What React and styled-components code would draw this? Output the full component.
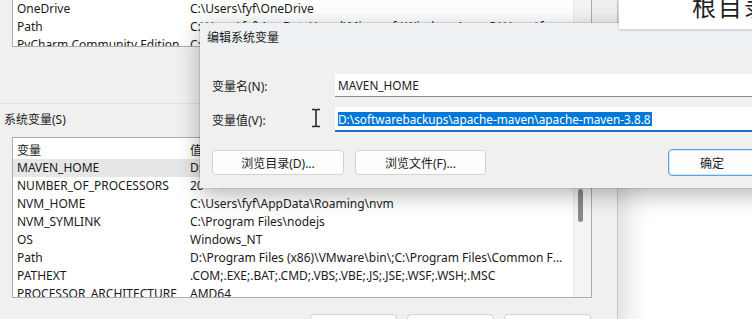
import React from "react";
import styled, { createGlobalStyle } from "styled-components";

const GlobalStyle = createGlobalStyle`
  html, body {
    margin: 0;
    padding: 0;
  }
  body {
    width: 752px;
    height: 319px;
    overflow: hidden;
    background: #ffffff;
    font-family: "Noto Sans", "Noto Sans CJK SC", sans-serif;
    color: #1b1b1b;
  }
`;

const Desktop = styled.div`
  position: relative;
  width: 752px;
  height: 319px;
  overflow: hidden;
  background: #ffffff;
`;

// background window: environment variables
const EnvWindow = styled.div`
  position: absolute;
  left: 0;
  top: 0;
  width: 617px;
  height: 340px;
  background: #f0f0f0;
  border-right: 1px solid #c9c9c9;
  box-shadow: 6px 0 28px rgba(0, 0, 0, 0.16);
  display: flex;
  flex-direction: column;
  z-index: 1;
`;

const ListBox = styled.div`
  margin-left: 12px;
  width: 580px;
  height: ${(p) => p.$height}px;
  margin-top: ${(p) => p.$top || 0}px;
  background: #ffffff;
  border: 1px solid #acacac;
  border-top-color: ${(p) => (p.$cut ? "transparent" : "#acacac")};
  box-sizing: border-box;
  display: flex;
  overflow: hidden;
`;

const Rows = styled.div`
  flex: 1;
  min-width: 0;
  padding-top: ${(p) => p.$pad || 0}px;
`;

const Row = styled.div`
  display: grid;
  grid-template-columns: 173px 1fr;
  height: 18px;
  align-items: center;
  padding-left: 4px;
  font-size: 12px;
  white-space: nowrap;
  background: ${(p) => (p.$selected ? "#e6e6e6" : "transparent")};
`;

const Cell = styled.span`
  overflow: hidden;
  text-overflow: ellipsis;
  padding-right: ${(p) => (p.$name ? 2 : 10)}px;
`;

const Scrollbar = styled.div`
  position: relative;
  width: 17px;
  background: #f4f4f4;
  border-left: 1px solid #ebebeb;
`;

const Thumb = styled.div`
  position: absolute;
  left: 4px;
  top: ${(p) => p.$top}px;
  width: 5px;
  height: ${(p) => p.$height}px;
  border-radius: 3px;
  background: #8a8a8a;
`;

const Separator = styled.div`
  margin-top: 56px;
  height: 0;
  border-top: 1px solid #e0e0e0;
`;

const GroupLabel = styled.div`
  margin-top: 8px;
  padding-left: 4px;
  font-size: 12px;
  line-height: 16px;
  height: 16px;
`;

const BottomButtons = styled.div`
  display: flex;
  gap: 10px;
  padding-left: 310px;
  margin-top: 16px;
`;

const Button = styled.div`
  width: ${(p) => p.$w}px;
  height: ${(p) => p.$h || 25}px;
  box-sizing: border-box;
  background: #fdfdfd;
  border: 1px solid ${(p) => (p.$primary ? "#5da3de" : "#d3d3d3")};
  box-shadow: ${(p) => (p.$primary ? "inset 0 0 0 1px #cfe4f6" : "none")};
  border-radius: 4px;
  font-size: 12px;
  display: flex;
  align-items: center;
  justify-content: center;
  flex-shrink: 0;
`;

// foreground dialog: edit system variable
const Dialog = styled.div`
  position: absolute;
  left: 200px;
  top: 23px;
  width: 580px;
  height: 165px;
  background: #f0f0f0;
  box-shadow: 0 6px 22px rgba(0, 0, 0, 0.3), 0 0 0 1px rgba(0, 0, 0, 0.1);
  display: flex;
  flex-direction: column;
  z-index: 2;
`;

const TitleBar = styled.div`
  height: 27px;
  background: #eef2f4;
  padding-left: 7px;
  display: flex;
  align-items: center;
  font-size: 12px;
`;

const DialogBody = styled.div`
  flex: 1;
  padding: 24px 24px 0 12px;
  display: flex;
  flex-direction: column;
`;

const FieldRow = styled.div`
  display: flex;
  align-items: center;
  margin-top: ${(p) => p.$gap || 0}px;
`;

const FieldLabel = styled.div`
  width: 123px;
  font-size: 12px;
  flex-shrink: 0;
`;

const Input = styled.div`
  flex: 1;
  height: ${(p) => p.$h}px;
  box-sizing: border-box;
  background: #ffffff;
  border-bottom: ${(p) => (p.$focused ? "2px solid #1a73c9" : "1px solid #8c8c8c")};
  padding-left: 3px;
  display: flex;
  align-items: center;
  font-size: 11.8px;
  white-space: nowrap;
`;

const Selection = styled.span`
  background: #0078d7;
  color: #ffffff;
  line-height: 14px;
  padding-right: 1px;
`;

const DialogButtons = styled.div`
  display: flex;
  align-items: center;
  margin-top: 17px;
  gap: 11px;
`;

const Spacer = styled.div`
  flex: 1;
`;

const Cursor = styled.svg`
  position: absolute;
  left: 310px;
  top: 108px;
  z-index: 5;
`;

// white window peeking at top right
const CornerWindow = styled.div`
  position: absolute;
  left: 619px;
  top: 0;
  width: 140px;
  height: 29px;
  background: #ffffff;
  box-shadow: 0 1px 3px rgba(0, 0, 0, 0.18);
  padding-left: 73px;
  box-sizing: border-box;
  overflow: hidden;
  z-index: 3;
`;

const CornerTitle = styled.div`
  margin-top: -5px;
  font-size: 24px;
  line-height: 24px;
  letter-spacing: 2px;
  color: #1e1e1e;
  white-space: nowrap;
`;

const userVars = [
  ["OneDrive", "C:\\Users\\fyf\\OneDrive"],
  ["Path", "C:\\Users\\fyf\\AppData\\Local\\Microsoft\\WindowsApps;C:\\Users\\fyf\\.dotnet\\tools"],
  ["PyCharm Community Edition", "C:\\Program Files\\JetBrains\\PyCharm Community Edition\\bin;"],
];

const sysVars = [
  ["MAVEN_HOME", "D:\\softwarebackups\\apache-maven\\apache-maven-3.8.8"],
  ["NUMBER_OF_PROCESSORS", "20"],
  ["NVM_HOME", "C:\\Users\\fyf\\AppData\\Roaming\\nvm"],
  ["NVM_SYMLINK", "C:\\Program Files\\nodejs"],
  ["OS", "Windows_NT"],
  ["Path", "D:\\Program Files (x86)\\VMware\\bin\\;C:\\Program Files\\Common Files\\Oracle\\Java\\javapath"],
  ["PATHEXT", ".COM;.EXE;.BAT;.CMD;.VBS;.VBE;.JS;.JSE;.WSF;.WSH;.MSC"],
  ["PROCESSOR_ARCHITECTURE", "AMD64"],
];

export default function App() {
  return (
    <Desktop>
      <GlobalStyle />

      <EnvWindow>
        <ListBox $height={49} $top={-2} $cut>
          <Rows>
            {userVars.map(([n, v]) => (
              <Row key={n}>
                <Cell $name>{n}</Cell>
                <Cell>{v}</Cell>
              </Row>
            ))}
          </Rows>
          <Scrollbar />
        </ListBox>

        <Separator />
        <GroupLabel>系统变量(S)</GroupLabel>

        <ListBox $height={162} $top={9}>
          <Rows $pad={3}>
            <Row>
              <Cell $name>变量</Cell>
              <Cell>值</Cell>
            </Row>
            {sysVars.map(([n, v], i) => (
              <Row key={n} $selected={i === 0}>
                <Cell $name>{n}</Cell>
                <Cell>{v}</Cell>
              </Row>
            ))}
          </Rows>
          <Scrollbar>
            <Thumb $top={51} $height={33} />
          </Scrollbar>
        </ListBox>

        <BottomButtons>
          <Button $w={87} $h={26}>新建(W)...</Button>
          <Button $w={87} $h={26}>编辑(I)...</Button>
          <Button $w={87} $h={26}>删除(L)</Button>
        </BottomButtons>
      </EnvWindow>

      <Dialog>
        <TitleBar>编辑系统变量</TitleBar>
        <DialogBody>
          <FieldRow>
            <FieldLabel>变量名(N):</FieldLabel>
            <Input $h={23}>MAVEN_HOME</Input>
          </FieldRow>
          <FieldRow $gap={10}>
            <FieldLabel>变量值(V):</FieldLabel>
            <Input $h={25} $focused>
              <Selection>D:\softwarebackups\apache-maven\apache-maven-3.8.8</Selection>
            </Input>
          </FieldRow>
          <DialogButtons>
            <Button $w={132}>浏览目录(D)...</Button>
            <Button $w={131}>浏览文件(F)...</Button>
            <Spacer />
            <Button $w={88} $h={27} $primary>确定</Button>
          </DialogButtons>
        </DialogBody>
      </Dialog>

      <Cursor width="12" height="20" viewBox="0 0 12 20">
        <path d="M2 1.5h3l1 1 1-1h3M6 2.5v15M2 18.5h3l1-1 1 1h3" fill="none" stroke="#2b2b2b" strokeWidth="1.6" />
      </Cursor>

      <CornerWindow>
        <CornerTitle>根目录</CornerTitle>
      </CornerWindow>
    </Desktop>
  );
}
